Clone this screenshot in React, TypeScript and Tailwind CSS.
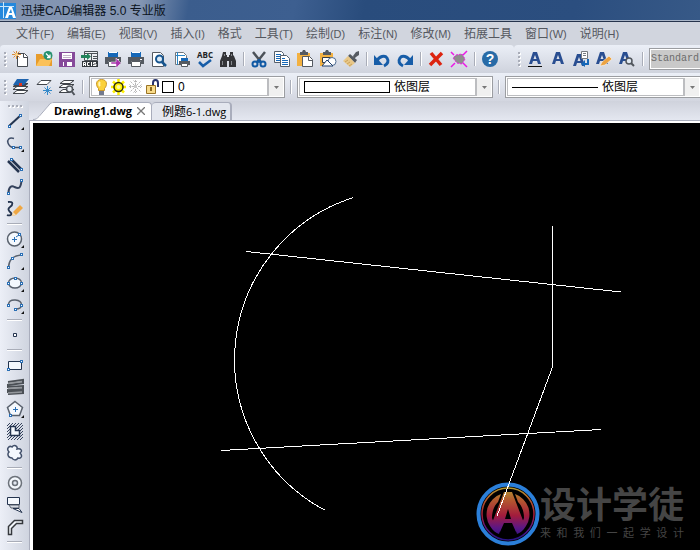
import { ReactNode, useState } from "react";

type Tool = { label: string; icon: ReactNode; more?: boolean };

const menus = [
  ["文件", "(F)"],
  ["编辑", "(E)"],
  ["视图", "(V)"],
  ["插入", "(I)"],
  ["格式", ""],
  ["工具", "(T)"],
  ["绘制", "(D)"],
  ["标注", "(N)"],
  ["修改", "(M)"],
  ["拓展工具", ""],
  ["窗口", "(W)"],
  ["说明", "(H)"],
];

function Icon({ children }: { children: ReactNode }) {
  return (
    <svg width="18" height="18" viewBox="0 0 18 18" fill="none" aria-hidden="true" className="shrink-0">
      {children}
    </svg>
  );
}

// small blue square used for the grips of a shape
function Node({ x, y }: { x: number; y: number }) {
  return <rect x={x - 0.5} y={y - 0.5} width="2" height="2" fill="#fff" stroke="#2a6fb5" />;
}

const printer = (
  <>
    <path d="M4 2h10v5H4z" fill="#1668b8" />
    <path d="M5 2h8v1H5z" fill="#fff" />
    <path d="M1 7h16v7h-3v-3H4v3H1z" fill="#555a61" />
    <path d="M4.500 11.500h9v5h-9z" fill="#fff" stroke="#555a61" />
    <path d="M13 9.500h2" stroke="#fff" />
  </>
);

const clipboard = (
  <>
    <path d="M1 3h13v13H1z" fill="#f3b141" />
    <path d="M4 2h2l1-2h2l1 2h2v3H4z" fill="#555a61" />
  </>
);

const fileTools: Tool[] = [
  {
    label: "新建",
    icon: (
      <Icon>
        <path d="M5.500 3.500h7l3 3v10h-10z" fill="#fff" stroke="#454a50" />
        <path d="M11.500 4v3.500H15" stroke="#454a50" />
        <path d="M4.500 1v8M0 4.500h9M1.500 1.500l6 6M7.500 1.500l-6 6" stroke="#d98b3a" />
        <circle cx="4.500" cy="4.500" r="1.500" fill="#ffd98a" />
      </Icon>
    ),
  },
  {
    label: "打开",
    icon: (
      <Icon>
        <path d="M1 4h6l1 2h9v10H1z" fill="#e79c2b" />
        <path d="M1 16l4-7h12l-3 7z" fill="#fbc159" />
        <circle cx="13" cy="5.500" r="4.500" fill="#27916f" />
        <path d="M11 3.500l4 4M15 4.500v3h-3" stroke="#fff" strokeWidth="1.300" />
      </Icon>
    ),
  },
  {
    label: "保存",
    icon: (
      <Icon>
        <path d="M1 2h16v15H1z" fill="#864a9a" />
        <path d="M4 3h10v6H4z" fill="#fff" />
        <path d="M5 5.500h8M5 7.500h8" stroke="#c4b3ca" />
        <path d="M5 12h9v4H5z" fill="#fff" />
        <path d="M6 12h3v4H6z" fill="#864a9a" />
      </Icon>
    ),
  },
  {
    label: "输出ACIS",
    icon: (
      <Icon>
        <path d="M3.500 1.500h13v9h-13z" fill="#eef0f3" stroke="#4c5257" />
        <path d="M4 3.500h12M10.500 4v6M12 6.500h4M12 8.500h4" stroke="#4c5257" />
        <path d="M0 5h6V3l4 3.500L6 10V8H0z" fill="#22845b" />
        <path d="M1 11h16v6H1z" fill="#33383d" />
        <path d="M2.500 16v-3.500h2V16M3 14.500h2M8.500 12.500h-2v3h2M10.500 12v4M15 12.500h-2.500V14H15v1.500h-3" stroke="#fff" />
      </Icon>
    ),
  },
  {
    label: "批量打印",
    icon: (
      <Icon>
        {printer}
        <path d="M7 12h5V8l5 5-5 5v-4H7z" fill="#a935ad" stroke="#fff" strokeWidth=".5" />
      </Icon>
    ),
  },
  { label: "打印", icon: <Icon>{printer}</Icon> },
  {
    label: "打印预览",
    icon: (
      <Icon>
        <path d="M2.500 2.500h8l3 3v11h-11z" fill="#fff" stroke="#555a61" />
        <circle cx="9.500" cy="9" r="3.500" fill="#dceaf5" stroke="#17558f" strokeWidth="2" />
        <path d="M12 12l4 4" stroke="#17558f" strokeWidth="2.500" />
      </Icon>
    ),
  },
  {
    label: "页面设置",
    icon: (
      <Icon>
        <path d="M2.500 2.500h8l3 3v9h-11z" fill="#fff" stroke="#72777c" />
        <path d="M4.500 2v13M3 5.500h9" stroke="#2a86c7" />
        <path d="M8 8h7v3H8z" fill="#1668b8" />
        <path d="M6 11h11v4H6z" fill="#555a61" />
        <path d="M8.500 13.500h6v3h-6z" fill="#fff" stroke="#555a61" />
      </Icon>
    ),
  },
  {
    label: "拼写检查",
    icon: (
      <span className="flex flex-col items-center font-['Open_Sans'] text-[8px] leading-[8px] font-bold text-[#202225]">
        ABC
        <svg width="16" height="9" viewBox="0 0 16 9" fill="none" aria-hidden="true">
          <path d="M2 3l4 4 8-6" stroke="#175da8" strokeWidth="2.500" />
        </svg>
      </span>
    ),
  },
  {
    label: "查找",
    icon: (
      <Icon>
        <path d="M4 2h3v3h1v12H1v-6l2-5zM11 2h3v3l1 1 2 5v6h-7V5h1z" fill="#333438" />
        <path d="M7 7h4v4H7z" fill="#333438" />
        <path d="M3.500 11v4M12.500 11v4M5.500 4v2M12.500 4v2" stroke="#85888d" />
      </Icon>
    ),
  },
];

const editTools: Tool[] = [
  {
    label: "剪切",
    icon: (
      <Icon>
        <path d="M3 2l8 10M15 2L7 12" stroke="#4c5259" strokeWidth="2.500" />
        <circle cx="5" cy="14" r="2.500" stroke="#1059a4" strokeWidth="2" />
        <circle cx="13" cy="14" r="2.500" stroke="#1059a4" strokeWidth="2" />
        <circle cx="9" cy="11" r="2" fill="#1059a4" />
      </Icon>
    ),
  },
  {
    label: "复制",
    icon: (
      <Icon>
        <path d="M1.500 1.500h7l2 2v9h-9z" fill="#fff" stroke="#555f6b" />
        <path d="M3 4.500h5M3 6.500h5M3 8.500h5M3 10.500h5" stroke="#1668b8" />
        <path d="M7.500 5.500h6l3 3v8h-9z" fill="#fff" stroke="#555f6b" />
        <path d="M9 8.500h3M9 10.500h6M9 12.500h6M9 14.500h6" stroke="#1668b8" />
      </Icon>
    ),
  },
  {
    label: "粘贴",
    icon: (
      <Icon>
        {clipboard}
        <path d="M6.500 6.500h7l3 3v7h-10z" fill="#fff" stroke="#555a61" />
        <path d="M12.500 7v3.500H16" stroke="#555a61" />
      </Icon>
    ),
  },
  {
    label: "粘贴为块",
    icon: (
      <Icon>
        {clipboard}
        <path d="M3.500 7.500h8v5h-8z" fill="#fff" stroke="#333a43" />
        <circle cx="13" cy="11.500" r="4" fill="#fff" stroke="#4d6b91" />
        <path d="M3 16l5-6 6 6z" fill="#fff" stroke="#1f3f6d" />
      </Icon>
    ),
  },
  {
    label: "特性匹配",
    icon: (
      <Icon>
        <path d="M11 6l3-4 3-1v4l-3 2-2 2" fill="#555a61" />
        <path d="M8 4l7 6-2 3-7-7z" fill="#555a61" />
        <path d="M6 6l7 7-5 4-7-6z" fill="#e8c788" />
        <path d="M3 12l3-2M5 14l3-2M7 16l3-2" stroke="#caa35c" />
      </Icon>
    ),
  },
];

const undoTools: Tool[] = [
  {
    label: "放弃",
    icon: (
      <Icon>
        <path d="M4 11c2-5 8-6 10-3 2 3 1 6-3 8" stroke="#175da8" strokeWidth="3" />
        <path d="M1 5v10h9z" fill="#175da8" />
      </Icon>
    ),
  },
  {
    label: "重做",
    icon: (
      <Icon>
        <path d="M14 11C12 6 6 5 4 8c-2 3-1 6 3 8" stroke="#175da8" strokeWidth="3" />
        <path d="M17 5v10H8z" fill="#175da8" />
      </Icon>
    ),
  },
];

const deleteTools: Tool[] = [
  {
    label: "删除",
    icon: (
      <Icon>
        <path d="M4 3l10 12M15 3L3 15" stroke="#dc2410" strokeWidth="3.500" />
      </Icon>
    ),
  },
  {
    label: "分解",
    icon: (
      <Icon>
        <path d="M6 5l6-1 3 5-3 5-5-1-4-5z" fill="#8d8f8c" stroke="#ec18e6" strokeDasharray="2 1" />
        <path d="M1 2l3 3M17 1l-4 4M1 17l4-4M17 17l-4-4" stroke="#ec18e6" strokeWidth="1.500" />
      </Icon>
    ),
  },
];

const helpTools: Tool[] = [
  {
    label: "帮助",
    icon: (
      <span className="flex size-4 items-center justify-center rounded-full bg-[#286ba7] font-['Liberation_Sans'] text-sm leading-4 font-bold text-white">
        ?
      </span>
    ),
  },
];

// bold letter A shared by the text style tools
const letterA = <path d="M3 14L7 2h4l4 12h-3l-1-3H7l-1 3zM7.500 9h3L9 5z" fill="#294e91" fillRule="evenodd" />;

const textTools: Tool[] = [
  {
    label: "文字样式",
    icon: (
      <Icon>
        {letterA}
        <path d="M2 16.500h14" stroke="#111" />
      </Icon>
    ),
  },
  { label: "单行文字", icon: <Icon>{letterA}</Icon> },
  {
    label: "多行文字",
    icon: (
      <Icon>
        <g transform="translate(-2 2)">{letterA}</g>
        <path d="M9.500 1.500h6v7h-6z" fill="#fff" stroke="#777c82" />
        <path d="M11 3.500h3M11 5.500h3" stroke="#777c82" />
        <path d="M16 9v5h-3" stroke="#1668b8" strokeWidth="2" />
        <path d="M13 10v7l-4-3z" fill="#1668b8" />
      </Icon>
    ),
  },
  {
    label: "编辑文字",
    icon: (
      <Icon>
        <g transform="translate(-2 0)">{letterA}</g>
        <path d="M5 16l2-4 7-6 3 3-7 6z" fill="#eca342" stroke="#fff" strokeWidth=".5" />
      </Icon>
    ),
  },
  {
    label: "查找文字",
    icon: (
      <Icon>
        <g transform="translate(-2 0)">{letterA}</g>
        <circle cx="11" cy="11" r="3" fill="#dfe8f1" stroke="#50555c" strokeWidth="1.500" />
        <path d="M13 13l3 3" stroke="#50555c" strokeWidth="2" />
      </Icon>
    ),
  },
];

const layerTools: Tool[] = [
  {
    label: "图层特性",
    icon: (
      <Icon>
        <path d="M5 12.500h11l-4 3H1z" fill="#fff" stroke="#41454b" />
        <path d="M5 8.500h11l-4 3H1z" fill="#fff" stroke="#41454b" />
        <path d="M5 5.500h11l-4 3H1z" fill="#41454b" stroke="#41454b" />
        <path d="M5 1h12l-5 6H1z" fill="#1f64ae" />
        <path d="M7 5h3v3H7z" fill="#e2341d" />
      </Icon>
    ),
  },
  {
    label: "冻结图层",
    icon: (
      <Icon>
        <path d="M6 2.500h10l-4 4H2z" fill="#fff" stroke="#41454b" />
        <path d="M12.500 8v9M8 12.500h9M9.500 9.500l6 6M15.500 9.500l-6 6" stroke="#3489c9" />
      </Icon>
    ),
  },
  {
    label: "查找图层",
    icon: (
      <Icon>
        <path d="M5 11.500h11l-4 3H1z" fill="#fff" stroke="#41454b" />
        <path d="M5 6.500h11l-4 3H1z" fill="#fff" stroke="#41454b" />
        <path d="M6 2.500h10l-4 3H2z" fill="#fff" stroke="#41454b" />
        <circle cx="11.500" cy="11" r="3" fill="#e8edf3" stroke="#50555c" strokeWidth="1.500" />
        <path d="M13.500 13l3 4" stroke="#50555c" strokeWidth="2" />
      </Icon>
    ),
  },
];

const drawGroups: Tool[][] = [
  [
    {
      label: "直线",
      more: true,
      icon: (
        <Icon>
          <path d="M3 14L15 3" stroke="#24344f" strokeWidth="2" />
          <Node x={3} y={14} />
          <Node x={14} y={3} />
        </Icon>
      ),
    },
    {
      label: "多段线",
      more: true,
      icon: (
        <Icon>
          <path d="M8 4.500C3 3 1 6 2 9c1 3 3 4.500 6 4.500h7" stroke="#42506a" strokeWidth="1.500" />
          <Node x={7} y={13} />
          <Node x={14} y={13} />
        </Icon>
      ),
    },
    {
      label: "双线",
      icon: (
        <Icon>
          <path d="M6 4l10 10M2 5l11 11" stroke="#24344f" strokeWidth="2.500" />
          <Node x={5} y={3} />
          <Node x={15} y={13} />
        </Icon>
      ),
    },
    {
      label: "样条曲线",
      icon: (
        <Icon>
          <path d="M2.500 15c0-6 3-8 6-6 4 2 6 2 7-6" stroke="#35435d" strokeWidth="2" />
          <Node x={2} y={15} />
          <Node x={15} y={2} />
        </Icon>
      ),
    },
    {
      label: "徒手画",
      icon: (
        <Icon>
          <path d="M2 2c6-1 5 3 2 5s-1 4 1 6-2 3-4 2" stroke="#24344f" strokeWidth="1.800" />
          <path d="M6 16l1-4 7-7 3 3-7 7z" fill="#efa743" />
          <path d="M6 16l1-4 3 3z" fill="#f4dfbd" />
        </Icon>
      ),
    },
  ],
  [
    {
      label: "圆",
      more: true,
      icon: (
        <Icon>
          <circle cx="8.500" cy="9" r="7" fill="#f4f8fd" stroke="#59616d" strokeWidth="1.500" />
          <path d="M6 9.500h5M8.500 7v5M10 7l3-2" stroke="#2a6fb5" />
          <Node x={13} y={4} />
        </Icon>
      ),
    },
    {
      label: "圆弧",
      more: true,
      icon: (
        <Icon>
          <path d="M2.500 15C3 8 6 4 15 3" stroke="#59616d" strokeWidth="1.500" />
          <Node x={2} y={15} />
          <Node x={6} y={6} />
          <Node x={15} y={2} />
        </Icon>
      ),
    },
    {
      label: "椭圆",
      more: true,
      icon: (
        <Icon>
          <ellipse cx="9" cy="9" rx="6.500" ry="5" fill="#f4f8fd" stroke="#59616d" strokeWidth="1.500" />
          <Node x={2} y={9} />
          <Node x={9} y={4} />
          <Node x={15} y={9} />
        </Icon>
      ),
    },
    {
      label: "椭圆弧",
      more: true,
      icon: (
        <Icon>
          <path d="M2.500 8c1-6 13-5 13 1 0 3-3 4-6 4" stroke="#59616d" strokeWidth="1.500" />
          <Node x={2} y={9} />
          <Node x={15} y={9} />
          <Node x={9} y={13} />
        </Icon>
      ),
    },
  ],
  [
    {
      label: "点",
      icon: (
        <Icon>
          <path d="M7.500 7.500h3v3h-3z" fill="#fff" stroke="#24344f" />
        </Icon>
      ),
    },
  ],
  [
    {
      label: "矩形",
      icon: (
        <Icon>
          <path d="M2.500 5.500h13v8h-13z" fill="#f4f8fd" stroke="#24344f" />
          <Node x={2} y={13} />
          <Node x={15} y={5} />
        </Icon>
      ),
    },
    {
      label: "螺旋",
      icon: (
        <Icon>
          <path d="M2 4l15-2v3L2 7v2l15-1v3L2 12v2l15-1v2L2 16" stroke="#4b5056" strokeWidth="2" />
          <path d="M2 5.500l14-2M2 10.500l14-1M2 15l14-1" stroke="#93979c" strokeWidth="1.500" />
        </Icon>
      ),
    },
    {
      label: "多边形",
      more: true,
      icon: (
        <Icon>
          <path d="M9 1.500l7.500 6-3 8h-9l-3-8z" fill="#f4f8fd" stroke="#59616d" strokeWidth="1.500" />
          <path d="M7 9.500h5M9.500 7v5" stroke="#2a6fb5" />
          <Node x={4} y={15} />
        </Icon>
      ),
    },
    {
      label: "面域",
      icon: (
        <Icon>
          <path
            d="M1 4l3-3M1 7l6-6M1 10l9-9M1 13L13 1M1 16L16 1M2 18L17 3M5 18L17 6M8 18l9-9M11 18l6-6M14 18l3-3"
            stroke="#35435d"
          />
          <path d="M4.500 4.500h5v4h4v5h-9z" fill="#f4f8fd" stroke="#24344f" strokeWidth="1.500" />
        </Icon>
      ),
    },
    {
      label: "云线",
      icon: (
        <Icon>
          <path
            d="M3 8C0 5 3 1 6 3c2-3 6-1 5 2 4-1 6 2 3 4 3 3 1 6-2 5-2 3-5 2-6 0-4 0-5-4-3-6z"
            fill="#f4f8fd"
            stroke="#42506a"
            strokeWidth="1.500"
          />
        </Icon>
      ),
    },
  ],
  [
    {
      label: "圆环",
      icon: (
        <Icon>
          <circle cx="9" cy="9" r="6.500" fill="#f4f8fd" stroke="#6c727a" strokeWidth="1.500" />
          <circle cx="9" cy="9" r="2.500" fill="#e2e7f0" stroke="#6c727a" strokeWidth="1.500" />
        </Icon>
      ),
    },
    {
      label: "擦除",
      icon: (
        <Icon>
          <path d="M1.500 1.500h12v7h-12z" fill="#f4f8fd" stroke="#24344f" />
          <path d="M3 9h10v3H5z" fill="#d5dbe5" stroke="#59616d" />
          <path d="M7 12.500h6l3 4z" fill="#fff" stroke="#24344f" />
        </Icon>
      ),
    },
    {
      label: "三维多段线",
      icon: (
        <Icon>
          <path d="M2.500 16.500v-8l6-6h8v3h-6l-5 5v6z" fill="#f4f8fd" stroke="#35383d" strokeWidth="1.500" />
        </Icon>
      ),
    },
  ],
];

function Grip() {
  return (
    <span className="mr-[3px] flex w-[3px] shrink-0 flex-col gap-[2px]">
      {[0, 1, 2, 3].map((n) => (
        <span key={n} className="size-[2px] bg-[#a9adb8] shadow-[1px_1px_0_#fff]" />
      ))}
    </span>
  );
}

function Divider() {
  return (
    <span className="flex w-2 shrink-0 justify-center">
      <span className="h-[14px] w-[2px] border-r border-white bg-[#a9adb8]" />
    </span>
  );
}

function ToolButtons({ tools }: { tools: Tool[] }) {
  return (
    <>
      {tools.map((tool) => (
        <button
          key={tool.label}
          type="button"
          aria-label={tool.label}
          className="flex h-[22px] w-[23px] shrink-0 items-center justify-center pr-px"
        >
          {tool.icon}
        </button>
      ))}
    </>
  );
}

function Dropdown({ label, value, children }: { label: string; value: string; children: ReactNode }) {
  return (
    <label className="flex h-[22px] w-[196px] shrink-0 border border-[#9b9da1] bg-white p-px">
      <span className="flex flex-1 items-center border border-r-2 border-[#bcbdc0] pl-1">
        {children}
        <select
          aria-label={label}
          className="h-full min-w-0 flex-1 appearance-none bg-transparent text-xs leading-4 text-black outline-none"
        >
          <option>{value}</option>
        </select>
      </span>
      <span className="flex w-[14px] items-center justify-center bg-[#f0f0f0]">
        <svg width="5" height="3" viewBox="0 0 5 3" aria-hidden="true">
          <path d="M0 0h5L2.500 3z" fill="#777" />
        </svg>
      </span>
    </label>
  );
}

function LayerState() {
  return (
    <span className="-ml-px flex shrink-0 items-center">
      <svg width="14" height="18" viewBox="0 0 14 18" fill="none" aria-hidden="true">
        <path d="M6.500 1.500c-6 0-6 6-3 9v2h6v-2c3-3 3-9-3-9z" fill="#fbd13a" stroke="#c9962a" />
        <path d="M5 4c-1 1-1 3 0 4" stroke="#fff6b8" strokeWidth="2" />
        <path d="M4 13h5v4H4z" fill="#747b8d" />
      </svg>
      <svg width="19" height="18" viewBox="0 0 19 18" fill="none" aria-hidden="true">
        <path d="M9.500 1v16M2 9h15M4 3.500l11 11M15 3.500l-11 11" stroke="#fff200" strokeWidth="2.500" />
        <circle cx="9.500" cy="9" r="4.500" fill="#fff200" stroke="#302f0c" strokeWidth="1.500" />
        <circle cx="9.500" cy="9" r="2" fill="#fff9a8" />
      </svg>
      <svg width="17" height="18" viewBox="0 0 17 18" fill="none" aria-hidden="true">
        <path
          d="M7.500 2v13M1 8.500h13M2.500 3.500l10 10M12.500 3.500l-10 10M5.500 2.500l2 2 2-2M5.500 14.500l2-2 2 2M1.500 6.500l2 2-2 2M13.500 6.500l-2 2 2 2"
          stroke="#b7b7b7"
          strokeDasharray="2 1"
        />
        <path d="M6 7h3v3H6z" fill="#c9c9c9" />
      </svg>
      <svg width="17" height="18" viewBox="0 0 17 18" fill="none" aria-hidden="true">
        <path d="M8 8V5c0-4 5-4 5 0v4" stroke="#28336d" strokeWidth="2" />
        <path d="M1.500 7.500h9v8h-9z" fill="#f8db8a" stroke="#9a7425" />
        <path d="M6 9v4" stroke="#8a681e" strokeWidth="2" />
      </svg>
      <span className="mr-1 size-3 border border-black bg-white" />
    </span>
  );
}

function Drawing() {
  return (
    <svg
      width="667"
      height="427"
      viewBox="33 123 667 427"
      fill="none"
      stroke="#fff"
      shapeRendering="crispEdges"
      className="absolute top-0 left-0"
      aria-label="Drawing1.dwg"
    >
      <path d="M353.500 197.500A170.300 170.300 0 0 0 324.500 510" />
      <path d="M246.500 251.500L621 292" />
      <path d="M221 450.500L601 429.500" />
      <path d="M552.500 226v141L497 516" />
    </svg>
  );
}

function Watermark() {
  return (
    <div className="absolute right-4 bottom-1 flex items-center">
      <svg width="64" height="64" viewBox="0 0 64 64" fill="none" aria-hidden="true">
        <defs>
          <linearGradient id="emblem" gradientUnits="userSpaceOnUse" x1="0" y1="6" x2="0" y2="56">
            <stop offset="0" stopColor="#b39a32" />
            <stop offset=".25" stopColor="#b3572f" />
            <stop offset=".55" stopColor="#a31c3c" />
            <stop offset=".8" stopColor="#5b1786" />
            <stop offset="1" stopColor="#2a1585" />
          </linearGradient>
        </defs>
        <circle cx="32" cy="32" r="29.500" stroke="#2b7fd9" strokeWidth="4" />
        <circle cx="32" cy="32" r="26" stroke="url(#emblem)" strokeWidth="1.500" />
        <path
          d="M25 12A21.500 21.500 0 0 0 14 44C17 49 20 51 23 52L25 46 18 41 16 36C16 28 19 23 22 20zM39 12A21.500 21.500 0 0 1 50 44C47 49 44 51 41 52L39 46 46 41 48 36C48 28 45 23 42 20z"
          fill="url(#emblem)"
        />
        <path d="M28 10h8l12 31-8 9-4-9h-8l-4 9-8-9zM32 27l-3 10h6z" fill="url(#emblem)" fillRule="evenodd" />
      </svg>
      <div className="flex flex-col text-[#454545]">
        <span className="text-[36px] leading-[38px] font-bold">设计学徒</span>
        <span className="flex justify-between text-[11px] leading-4">
          {"来和我们一起学设计".split("").map((char, i) => (
            <span key={i}>{char}</span>
          ))}
        </span>
      </div>
    </div>
  );
}

export default function App() {
  const [activeTab, setActiveTab] = useState("Drawing1.dwg");

  return (
    <div className="flex min-h-screen flex-col overflow-hidden bg-[#d3d7e0] font-['Liberation_Sans','Noto_Sans_CJK_SC',sans-serif] text-xs">
      <header className="flex h-[21px] shrink-0 items-center border-b border-[#aab6c8] bg-[linear-gradient(100deg,#8294b2_0%,#8496b3_20%,#3b5d8d_27%,#3d5f90_42%,#294c7c_52%,#2b4e7f_82%,#375987_100%)] pt-[2px]">
        <svg width="17" height="18" viewBox="0 0 17 18" fill="none" aria-hidden="true">
          <path d="M0 1h16v16H0z" fill="#2588dc" />
          <path d="M3.500 0v16M0 4.500h14" stroke="#cce7fa" />
          <path d="M5 16l4-11h3l4 11h-3l-1-3H9l-1 3zM9 11h3l-1-4z" fill="#fff" fillRule="evenodd" />
        </svg>
        <h1 className="ml-1 leading-4 text-[#0b1320]">迅捷CAD编辑器 5.0 专业版</h1>
      </header>

      <nav className="flex h-6 shrink-0 items-center gap-[13px] border-t border-[#26344c] bg-[#d1d5de] pl-4 text-[#55585f]">
        {menus.map(([name, key]) => (
          <button key={name} type="button" className="shrink-0 leading-4 whitespace-nowrap">
            {name}
            <span className="text-[11px]">{key}</span>
          </button>
        ))}
      </nav>

      <div className="flex h-7 shrink-0">
        <div className="flex shrink-0 items-center rounded-t bg-linear-to-b from-[#ebeff7] to-[#cfd3dd] pr-3 pl-1">
          <Grip />
          <ToolButtons tools={fileTools} />
          <Divider />
          <ToolButtons tools={editTools} />
          <Divider />
          <ToolButtons tools={undoTools} />
          <Divider />
          <ToolButtons tools={deleteTools} />
          <Divider />
          <ToolButtons tools={helpTools} />
        </div>
        <div className="flex min-w-0 flex-1 items-center overflow-hidden rounded-tl bg-linear-to-b from-[#ebeff7] to-[#cfd3dd] pl-1">
          <Grip />
          <ToolButtons tools={textTools} />
          <Divider />
          <label className="ml-[2px] flex h-[22px] w-[196px] shrink-0 border border-[#9b9da1] bg-white p-px">
            <select
              aria-label="文字样式"
              className="w-full appearance-none bg-[#c9c9c9] font-['Liberation_Mono',monospace] text-[10px] text-[#6b6b6b] outline-none"
            >
              <option>Standard</option>
            </select>
          </label>
        </div>
      </div>

      <div className="flex h-7 shrink-0 items-center overflow-hidden bg-linear-to-b from-[#ebeff7] to-[#d3d6e0] pl-1">
        <Grip />
        <ToolButtons tools={layerTools} />
        <Divider />
        <span className="ml-[2px] flex items-center gap-[2px]">
          <Dropdown label="图层" value="0">
            <LayerState />
          </Dropdown>
          <Divider />
          <Dropdown label="颜色" value="依图层">
            <span className="mr-1 h-3 w-[86px] border border-black" />
          </Dropdown>
          <Divider />
          <Dropdown label="线型" value="依图层">
            <span className="mr-1 h-px w-[86px] bg-black" />
          </Dropdown>
        </span>
      </div>

      <div className="flex flex-1">
        <aside className="flex w-[29px] shrink-0 flex-col items-center bg-linear-to-r from-[#eceff7] to-[#cfd4df]">
          <span className="flex h-[9px] items-center gap-[2px]">
            {[0, 1, 2, 3].map((n) => (
              <span key={n} className="size-[2px] bg-[#a9adb8] shadow-[1px_1px_0_#fff]" />
            ))}
          </span>
          {drawGroups.map((group, i) => (
            <div key={i} className="flex flex-col items-center">
              {group.map((tool) => (
                <button
                  key={tool.label}
                  type="button"
                  aria-label={tool.label}
                  className="relative flex h-[22px] w-[18px] items-center justify-center"
                >
                  {tool.icon}
                  {tool.more && (
                    <svg width="3" height="3" viewBox="0 0 3 3" className="absolute right-0 bottom-[2px]" aria-hidden="true">
                      <path d="M3 0v3H0z" fill="#111" />
                    </svg>
                  )}
                </button>
              ))}
              <span className="my-[3px] h-[2px] w-[15px] border-b border-white bg-[#a9adb8]" />
            </div>
          ))}
        </aside>

        <main className="flex min-w-0 flex-1 flex-col">
          <div className="flex h-[19px] shrink-0 items-end bg-linear-to-b from-[#cfd2dc] to-[#e4e7f0] pl-1">
            <svg width="21" height="18" viewBox="0 0 21 18" fill="none" aria-hidden="true">
              <path d="M0 18c3 0 4-2 6-4L16 3c1-2 3-3 5-3v18z" fill="#fff" />
              <path d="M0 17.500c3 0 4-1 6-3L16 3c1-2 3-2.500 5-2.500" stroke="#a9adbc" />
            </svg>
            <div className="flex h-[18px] items-center gap-[3px] rounded-tr border-t border-r border-[#a9adbc] bg-white pr-1 pb-px">
              <button
                type="button"
                onClick={() => setActiveTab("Drawing1.dwg")}
                className={`font-['Open_Sans','Noto_Sans_CJK_SC',sans-serif] text-[11px] leading-4 text-black ${
                  activeTab === "Drawing1.dwg" ? "font-bold" : ""
                }`}
              >
                Drawing1.dwg
              </button>
              <button type="button" aria-label="关闭" className="flex size-3 items-center justify-center">
                <svg width="8" height="8" viewBox="0 0 8 8" aria-hidden="true">
                  <path d="M0 0l8 8M8 0L0 8" stroke="#777" strokeWidth="1.300" />
                </svg>
              </button>
            </div>
            <button
              type="button"
              onClick={() => setActiveTab("例题6-1.dwg")}
              className={`h-[18px] rounded-t border-t border-r-2 border-[#a9adbc] bg-[#e4e7ef] pr-1 pl-[10px] font-['Open_Sans','Noto_Sans_CJK_SC',sans-serif] leading-4 text-black ${
                activeTab === "例题6-1.dwg" ? "font-bold" : ""
              }`}
            >
              例题<span className="text-[11px]">6-1.dwg</span>
            </button>
          </div>
          <div className="flex flex-1 border-t border-l border-[#a9adbc]">
            <div className="relative flex-1 overflow-hidden border-t-2 border-l-[3px] border-white bg-black">
              <Watermark />
              <Drawing />
            </div>
          </div>
        </main>
      </div>
    </div>
  );
}
